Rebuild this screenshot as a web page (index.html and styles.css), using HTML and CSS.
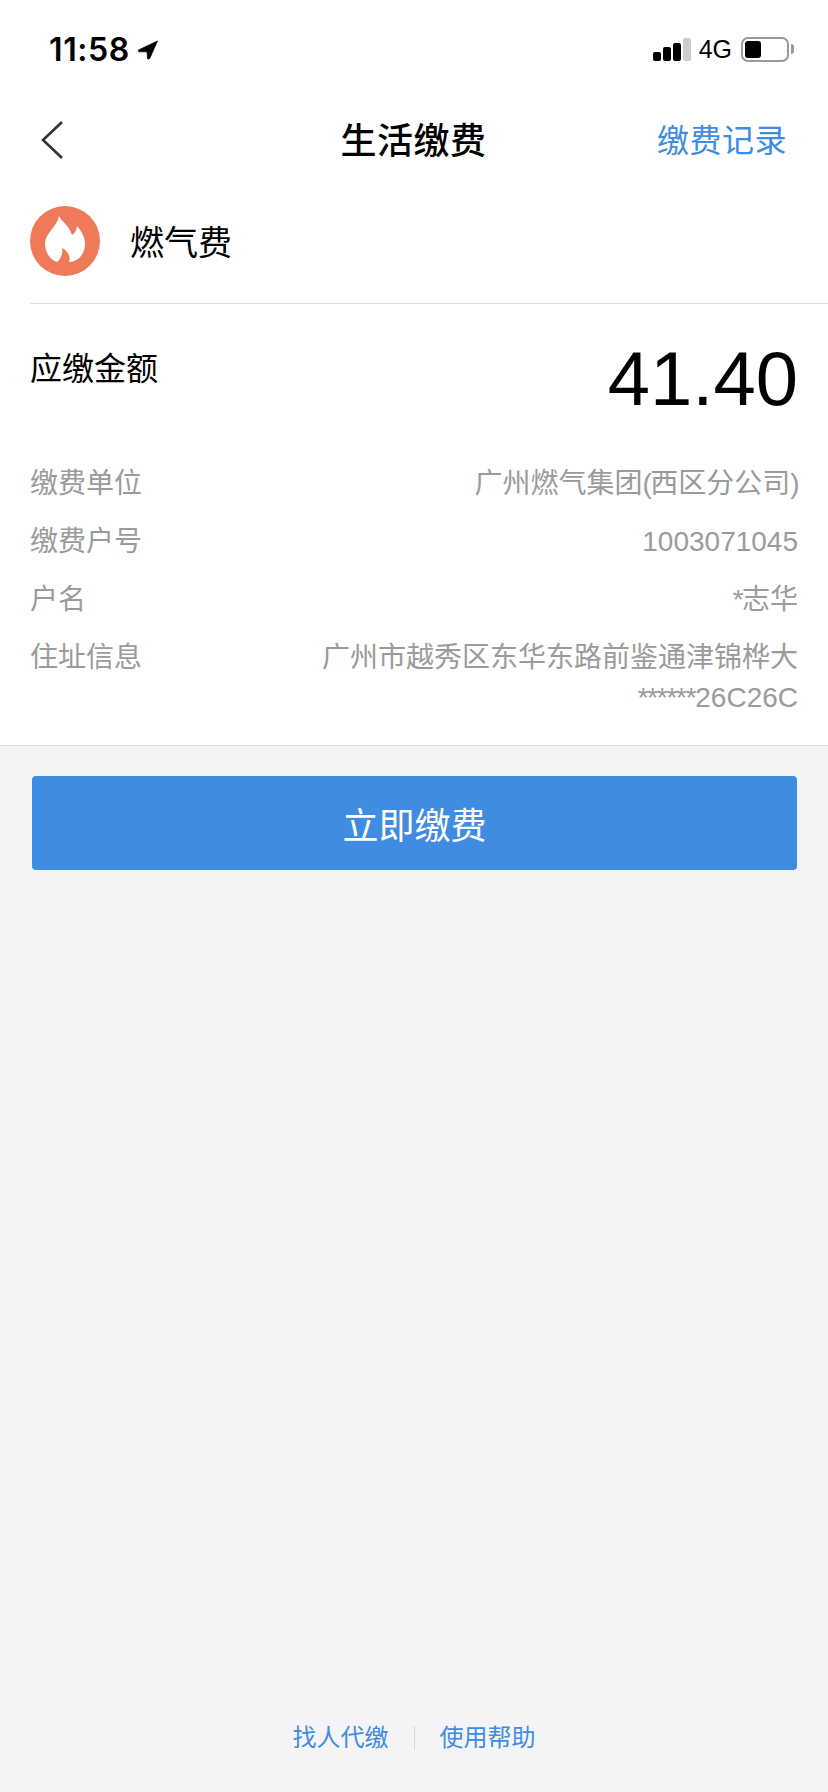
FILE: index.html
```html
<!DOCTYPE html>
<html lang="zh-CN">

<head>
    <meta charset="utf-8">
    <meta name="viewport" content="width=device-width, initial-scale=1">
    <title>生活缴费</title>
    <link rel="stylesheet" href="styles.css">
</head>

<body>
    <div id="page">
        <header id="statusbar">
            <div class="status-left">
                <span class="time">11:58</span>
                <svg class="location" width="20" height="20" viewBox="0 0 22 21">
                    <path d="M21.5 .5 L.5 10.5 Q0 12.5 1.5 12.5 L10 12.5 L10.5 20 Q12 21 13 19.5 Z" fill="#000" stroke="#000" stroke-width=".8" />
                </svg>
            </div>
            <div class="status-right">
                <div class="signal">
                    <i class="bar bar-1"></i>
                    <i class="bar bar-2"></i>
                    <i class="bar bar-3"></i>
                    <i class="bar bar-4"></i>
                </div>
                <span class="network">4G</span>
                <div class="battery">
                    <div class="battery-body"><div class="battery-level"></div></div>
                    <div class="battery-nub"></div>
                </div>
            </div>
        </header>

        <nav id="navbar">
            <svg class="back" width="24" height="40" viewBox="0 0 24 40">
                <path d="M22 2 L3 20 L22 38" fill="none" stroke="#333" stroke-width="2.6" />
            </svg>
            <h1 class="nav-title">生活缴费</h1>
            <a class="nav-link">缴费记录</a>
        </nav>

        <section id="bill">
            <div class="bill-type">
                <svg class="bill-icon" width="70" height="70" viewBox="0 0 70 70">
                    <circle cx="35" cy="35" r="35" fill="#ef7a5a" />
                    <path d="M29 10 C31 15 39 19 42 29 C45 27 47 24 47 20 C52 26 55 31 55 38 C55 48 48 56 39 56 C41 51 38 45 32 42 C33 47 31 53 27 56 C20 54 15 46 15 38 C15 27 27 21 29 10 Z" fill="#fff" />
                </svg>
                <span class="bill-name">燃气费</span>
            </div>

            <div class="amount">
                <span class="amount-label">应缴金额</span>
                <span class="amount-value">41.40</span>
            </div>

            <dl class="details">
                <div class="row">
                    <dt>缴费单位</dt>
                    <dd>广州燃气集团<span class="thin">(</span>西区分公司<span class="thin">)</span></dd>
                </div>
                <div class="row">
                    <dt>缴费户号</dt>
                    <dd>1003071045</dd>
                </div>
                <div class="row">
                    <dt>户名</dt>
                    <dd><span class="thin">*</span>志华</dd>
                </div>
                <div class="row">
                    <dt>住址信息</dt>
                    <dd>广州市越秀区东华东路前鉴通津锦桦大<br><span class="stars">******</span>26C26C</dd>
                </div>
            </dl>
        </section>

        <main id="actions">
            <button class="pay-button">立即缴费</button>
        </main>

        <footer id="links">
            <a>找人代缴</a>
            <span class="links-sep"></span>
            <a>使用帮助</a>
        </footer>
    </div>
</body>

</html>
```

FILE: styles.css
```css
html,
body {
    width: 100%;
    height: 100%;
    margin: 0;
    padding: 0;
}

body {
    font-family: "Liberation Sans", "Noto Sans CJK SC", sans-serif;
    background-color: #f4f4f7;
}

#page {
    display: flex;
    flex-direction: column;
    height: 1792px;
}

/* status bar */
#statusbar {
    display: flex;
    justify-content: space-between;
    align-items: center;
    height: 100px;
    padding: 0 34px 0 49px;
    box-sizing: border-box;
    background-color: #fff;
}

.status-left {
    display: flex;
    align-items: center;
    gap: 8px;
}

.time {
    font-family: Inter, sans-serif;
    font-size: 32px;
    font-weight: 600;
    line-height: 40px;
    letter-spacing: 0.6px;
    color: #000;
}

.location {
    display: block;
}

.status-right {
    display: flex;
    align-items: center;
    height: 26px;
    margin-bottom: 2px;
}

.signal {
    display: flex;
    align-items: flex-end;
    gap: 2px;
    height: 23px;
}

.bar {
    display: block;
    width: 8px;
    border-radius: 2px;
    background-color: #000;
}

.bar-1 {
    height: 9px;
}

.bar-2 {
    height: 14px;
}

.bar-3 {
    height: 18px;
}

.bar-4 {
    height: 23px;
    background-color: #ccc;
}

.network {
    margin-left: 8px;
    font-size: 25px;
    line-height: 26px;
    color: #000;
}

.battery {
    display: flex;
    align-items: center;
    margin-left: 9px;
}

.battery-body {
    width: 48px;
    height: 25px;
    padding: 2px;
    box-sizing: border-box;
    border: 2px solid #999;
    border-radius: 7px;
}

.battery-level {
    width: 16px;
    height: 17px;
    border-radius: 3px;
    background-color: #000;
}

.battery-nub {
    width: 3px;
    height: 10px;
    margin-left: 2px;
    border-radius: 0 3px 3px 0;
    background-color: #999;
}

/* nav bar */
#navbar {
    display: grid;
    grid-template-columns: 1fr auto 1fr;
    align-items: center;
    height: 80px;
    padding: 0 41px 0 40px;
    background-color: #fff;
}

.back {
    display: block;
}

.nav-title {
    margin: 4px 0 0;
    font-size: 36px;
    font-weight: 500;
    line-height: 48px;
    letter-spacing: 0.5px;
    color: #000;
}

.nav-link {
    justify-self: end;
    margin-top: 2px;
    font-size: 32px;
    line-height: 44px;
    letter-spacing: 0.5px;
    color: #408ce2;
}

/* bill */
#bill {
    padding-left: 30px;
    background-color: #fff;
    border-bottom: 1px solid #ddd;
}

.bill-type {
    display: flex;
    align-items: center;
    gap: 30px;
    height: 124px;
    box-sizing: border-box;
    padding-bottom: 2px;
    border-bottom: 1px solid #ddd;
}

.bill-icon {
    display: block;
}

.bill-name {
    margin-top: 4px;
    font-size: 34px;
    line-height: 44px;
    color: #000;
}

.amount {
    display: flex;
    justify-content: space-between;
    align-items: flex-start;
    padding: 43px 30px 0 0;
}

.amount-label {
    font-size: 32px;
    line-height: 44px;
    color: #000;
}

.amount-value {
    margin-top: -11px;
    font-size: 76px;
    line-height: 86px;
    color: #000;
}

.details {
    margin: 0;
    padding: 42px 30px 27px 0;
}

.row {
    display: flex;
    justify-content: space-between;
    align-items: flex-start;
    margin-bottom: 18px;
    font-size: 28px;
    line-height: 40px;
    color: #9b9b9b;
}

.row:last-child {
    margin-bottom: 0;
}

.row dt {
    flex-shrink: 0;
}

.row dd {
    margin: 0;
    text-align: right;
}

/* parens and asterisks run narrower than in the installed latin face */
.thin {
    letter-spacing: -1.6px;
}

.stars {
    letter-spacing: -1.3px;
}

/* button */
#actions {
    flex: 1;
    padding: 30px 31px 0 32px;
}

.pay-button {
    display: block;
    width: 100%;
    height: 94px;
    padding: 0;
    border: 0;
    border-radius: 4px;
    font-family: inherit;
    font-size: 36px;
    color: #fff;
    background-color: #408ce2;
}

/* footer */
#links {
    display: flex;
    justify-content: center;
    align-items: center;
    gap: 25px;
    height: 40px;
    margin-bottom: 34px;
    font-size: 24px;
    line-height: 40px;
    color: #408ce2;
}

.links-sep {
    width: 1px;
    height: 24px;
    background-color: #d8d8d8;
}
```
